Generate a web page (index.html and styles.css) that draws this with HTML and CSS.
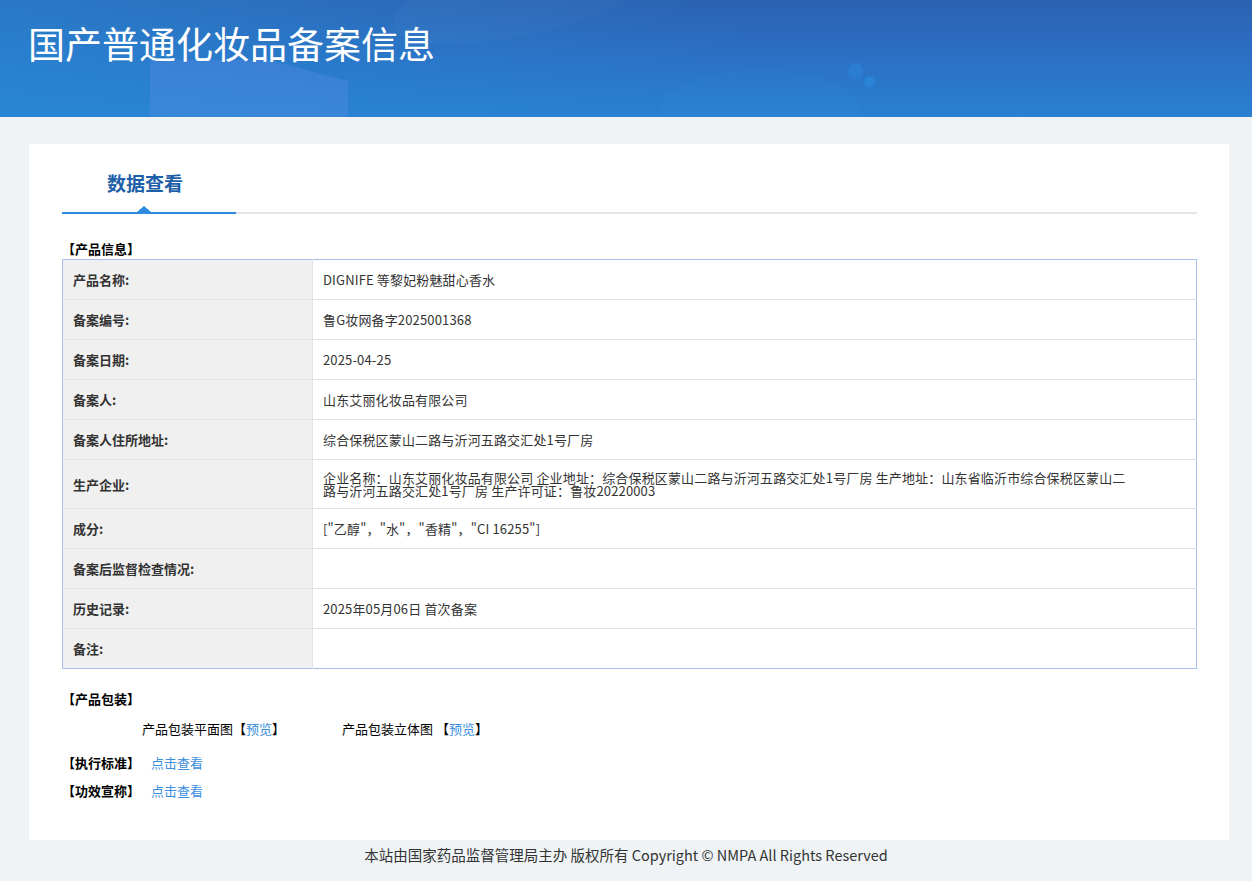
FILE: index.html
```html
<!DOCTYPE html>
<html lang="zh-CN">
<head>
<meta charset="utf-8">
<title>国产普通化妆品备案信息</title>
<link rel="stylesheet" href="styles.css">
</head>
<body>
<header class="banner">
  <div class="banner-deco deco-panel"></div>
  <div class="banner-deco deco-blob"></div>
  <div class="banner-deco deco-dot1"></div>
  <div class="banner-deco deco-dot2"></div>
  <div class="banner-deco deco-wave"></div>
  <h1 class="banner-title">国产普通化妆品备案信息</h1>
</header>

<main class="card">
  <div class="tabs">
    <div class="tab active">数据查看</div>
  </div>

  <div class="section-title first">【产品信息】</div>
  <table class="info">
    <tr><td class="label">产品名称:</td><td class="value">DIGNIFE 等黎妃粉魅甜心香水</td></tr>
    <tr><td class="label">备案编号:</td><td class="value">鲁G妆网备字2025001368</td></tr>
    <tr><td class="label">备案日期:</td><td class="value">2025-04-25</td></tr>
    <tr><td class="label">备案人:</td><td class="value">山东艾丽化妆品有限公司</td></tr>
    <tr><td class="label">备案人住所地址:</td><td class="value">综合保税区蒙山二路与沂河五路交汇处1号厂房</td></tr>
    <tr><td class="label">生产企业:</td><td class="value"><div class="wrap">企业名称：山东艾丽化妆品有限公司 企业地址：综合保税区蒙山二路与沂河五路交汇处1号厂房 生产地址：山东省临沂市综合保税区蒙山二路与沂河五路交汇处1号厂房 生产许可证：鲁妆20220003</div></td></tr>
    <tr><td class="label">成分:</td><td class="value">["乙醇"，"水"，"香精"，"CI 16255"]</td></tr>
    <tr><td class="label">备案后监督检查情况:</td><td class="value"></td></tr>
    <tr><td class="label">历史记录:</td><td class="value">2025年05月06日 首次备案</td></tr>
    <tr><td class="label">备注:</td><td class="value"></td></tr>
  </table>

  <div class="section-title pack">【产品包装】</div>
  <div class="pack-row">
    <span class="pack-item">产品包装平面图【<a class="link" href="#">预览</a>】</span>
    <span class="pack-item">产品包装立体图 【<a class="link" href="#">预览</a>】</span>
  </div>
  <div class="line-row std"><span class="section-inline">【执行标准】</span><a class="link" href="#">点击查看</a></div>
  <div class="line-row eff"><span class="section-inline">【功效宣称】</span><a class="link" href="#">点击查看</a></div>
</main>

<footer class="footer">本站由国家药品监督管理局主办 版权所有 Copyright © NMPA All Rights Reserved</footer>
</body>
</html>
```

FILE: styles.css
```css
* { box-sizing: border-box; }

html, body {
  margin: 0;
  padding: 0;
}

body {
  background: #eff3f6;
  font-family: "Noto Sans CJK SC", "Microsoft YaHei", sans-serif;
  color: #333;
  font-size: 13px;
}

.banner {
  position: relative;
  height: 117px;
  overflow: hidden;
  background: linear-gradient(180deg, #2c61b1 0%, #2b72c6 55%, #2a80d1 100%);
}

.banner::before {
  content: "";
  position: absolute;
  inset: 0;
  background: linear-gradient(90deg, rgba(40,140,215,0.55) 0%, rgba(40,140,215,0.25) 30%, rgba(40,140,215,0) 60%);
}

.banner-deco {
  position: absolute;
  pointer-events: none;
}

.deco-panel {
  left: 150px;
  top: 60px;
  width: 198px;
  height: 60px;
  background: rgba(90, 140, 230, 0.35);
  clip-path: polygon(0 0, 60% 0, 100% 35%, 100% 100%, 0 100%);
}

.deco-blob {
  left: 390px;
  top: -40px;
  width: 260px;
  height: 76px;
  border-radius: 50%;
  background: rgba(255, 255, 255, 0.025);
  transform: rotate(-12deg);
}

.deco-wave {
  left: 660px;
  top: 70px;
  width: 200px;
  height: 80px;
  border-radius: 50%;
  background: rgba(60, 150, 225, 0.08);
}

.deco-dot1 {
  left: 848px;
  top: 63px;
  width: 15px;
  height: 16px;
  border-radius: 50%;
  background: rgba(45, 135, 225, 0.45);
}

.deco-dot2 {
  left: 864px;
  top: 76px;
  width: 11px;
  height: 11px;
  border-radius: 50%;
  background: rgba(40, 140, 225, 0.6);
}

.banner-title {
  position: relative;
  margin: 0;
  padding: 18px 0 0 28px;
  font-size: 37px;
  line-height: 50px;
  font-weight: normal;
  color: #fff;
  letter-spacing: 0;
}

.card {
  width: 1200px;
  margin: 27px 0 0 29px;
  background: #fff;
  padding: 0 32px 41px 33px;
}

.tabs {
  display: flex;
  border-bottom: 2px solid #e6e6e6;
  padding-top: 26px;
}

.tab {
  position: relative;
  width: 174px;
  padding-left: 45px;
  font-size: 19px;
  font-weight: bold;
  line-height: 26px;
  color: #1d5fa8;
  padding-bottom: 16px;
  margin-bottom: -2px;
  border-bottom: 2px solid #2b8ae0;
}

.tab::after {
  content: "";
  position: absolute;
  left: 75px;
  bottom: 0;
  border-left: 7px solid transparent;
  border-right: 7px solid transparent;
  border-bottom: 6px solid #2b8ae0;
}

.section-title {
  font-weight: bold;
  color: #000;
  line-height: 16px;
  font-size: 13px;
}

.section-title.first {
  margin-top: 27px;
  margin-bottom: 2px;
}

.info {
  width: 100%;
  border-collapse: collapse;
  border: 1px solid #a3c3ee;
  table-layout: fixed;
}

.info td {
  height: 40px;
  padding: 11px 10px;
  line-height: 13px;
  border-top: 1px solid #e3e3e3;
  vertical-align: middle;
  font-size: 13px;
}

.info tr:first-child td { border-top: none; }

.info td.label {
  width: 250px;
  background: #f0f0f0;
  font-weight: bold;
  padding-left: 10px;
  border-right: 1px solid #e3e3e3;
  color: #333;
}

.info td.value {
  background: #fff;
  color: #333;
  letter-spacing: 0.15px;
}

.wrap {
  max-width: 812px;
}

.section-title.pack {
  margin-top: 22px;
}

.pack-row {
  display: flex;
  padding-left: 80px;
  margin-top: 14px;
  line-height: 16px;
  color: #000;
}

.pack-item {
  width: 200px;
}

.link {
  color: #3a8ee0;
  text-decoration: none;
}

.line-row {
  display: flex;
  gap: 11px;
  line-height: 16px;
}

.line-row.std { margin-top: 18px; }
.line-row.eff { margin-top: 12px; }

.section-inline {
  font-weight: bold;
  color: #000;
}

.footer {
  text-align: center;
  font-size: 14.5px;
  line-height: 20px;
  padding: 5px 0 15px;
  color: #333;
}
```
